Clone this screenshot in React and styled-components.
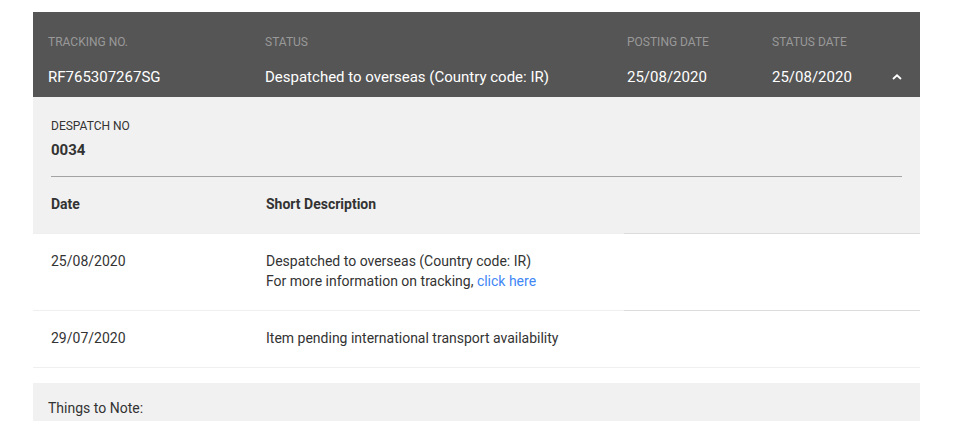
import { Fragment } from "react";
import styled, { createGlobalStyle } from "styled-components";

const GlobalStyle = createGlobalStyle`
  body {
    margin: 0;
    background: #ffffff;
    font-family: Roboto, "Liberation Sans", Arial, sans-serif;
    color: #333333;
  }
`;

const Page = styled.div`
  padding: 12px 0 0 33px;
`;

const Card = styled.div`
  width: 887px;
`;

const Summary = styled.div`
  display: grid;
  grid-template-columns: 217px 362px 145px 1fr 28px;
  align-items: end;
  background: #555555;
  padding: 22px 0 10px 15px;
  height: 53px;
`;

const Field = styled.div`
  display: flex;
  flex-direction: column;
  gap: 17px;
`;

const FieldLabel = styled.span`
  font-size: 12px;
  line-height: 16px;
  color: #999999;
  text-transform: uppercase;
`;

const FieldValue = styled.span`
  font-size: 15px;
  line-height: 20px;
  color: #ffffff;
`;

const Toggle = styled.button`
  display: flex;
  align-items: center;
  justify-content: flex-start;
  height: 20px;
  padding: 0;
  border: 0;
  background: transparent;
  cursor: pointer;
`;

const Details = styled.div`
  background: #f1f1f1;
`;

const Despatch = styled.div`
  padding: 21px 18px 0;
`;

const DespatchLabel = styled.div`
  font-size: 12px;
  line-height: 16px;
  color: #333333;
`;

const DespatchValue = styled.div`
  margin-top: 6px;
  font-size: 15px;
  line-height: 20px;
  font-weight: 700;
  color: #333333;
`;

const Divider = styled.hr`
  margin: 16px 0 0;
  border: 0;
  border-top: 1px solid #a3a3a3;
`;

const Table = styled.div`
  display: grid;
  grid-template-columns: 215px 376px 1fr;
`;

const Cell = styled.div`
  padding: 17px 0 19px 18px;
  font-size: 14px;
  line-height: 20px;
  font-weight: ${(p) => (p.$head ? 700 : 400)};
  background: ${(p) => (p.$head ? "#f1f1f1" : "#ffffff")};
  border-bottom: 1px solid ${(p) => (p.$strong ? "#dcdcdc" : "#efefef")};
`;

const Link = styled.a`
  color: #3f87f5;
  text-decoration: none;
`;

const Notes = styled.div`
  margin-top: 15px;
  background: #f1f1f1;
  padding: 15px 15px 20px;
  font-size: 14px;
  line-height: 20px;
  color: #333333;
`;

const summary = [
  { label: "Tracking No.", value: "RF765307267SG" },
  { label: "Status", value: "Despatched to overseas (Country code: IR)" },
  { label: "Posting Date", value: "25/08/2020" },
  { label: "Status Date", value: "25/08/2020" },
];

const events = [
  {
    date: "25/08/2020",
    text: (
      <>
        Despatched to overseas (Country code: IR)
        <br />
        For more information on tracking, <Link href="#">click here</Link>
      </>
    ),
    strong: true,
  },
  {
    date: "29/07/2020",
    text: "Item pending international transport availability",
    strong: false,
  },
];

const ChevronUp = () => (
  <svg width="10" height="6" viewBox="0 0 10 6" fill="none">
    <path d="M1 5 L5 1.3 L9 5" stroke="#ffffff" strokeWidth="1.8" />
  </svg>
);

export default function App() {
  return (
    <>
      <GlobalStyle />
      <Page>
        <Card>
          <Summary>
            {summary.map((f) => (
              <Field key={f.label}>
                <FieldLabel>{f.label}</FieldLabel>
                <FieldValue>{f.value}</FieldValue>
              </Field>
            ))}
            <Toggle aria-label="Collapse">
              <ChevronUp />
            </Toggle>
          </Summary>
          <Details>
            <Despatch>
              <DespatchLabel>DESPATCH NO</DespatchLabel>
              <DespatchValue>0034</DespatchValue>
              <Divider />
            </Despatch>
            <Table>
              <Cell $head>Date</Cell>
              <Cell $head>Short Description</Cell>
              <Cell $head $strong />
              {events.map((e) => (
                <Fragment key={e.date}>
                  <Cell>{e.date}</Cell>
                  <Cell>{e.text}</Cell>
                  <Cell $strong={e.strong} />
                </Fragment>
              ))}
            </Table>
          </Details>
          <Notes>Things to Note:</Notes>
        </Card>
      </Page>
    </>
  );
}
